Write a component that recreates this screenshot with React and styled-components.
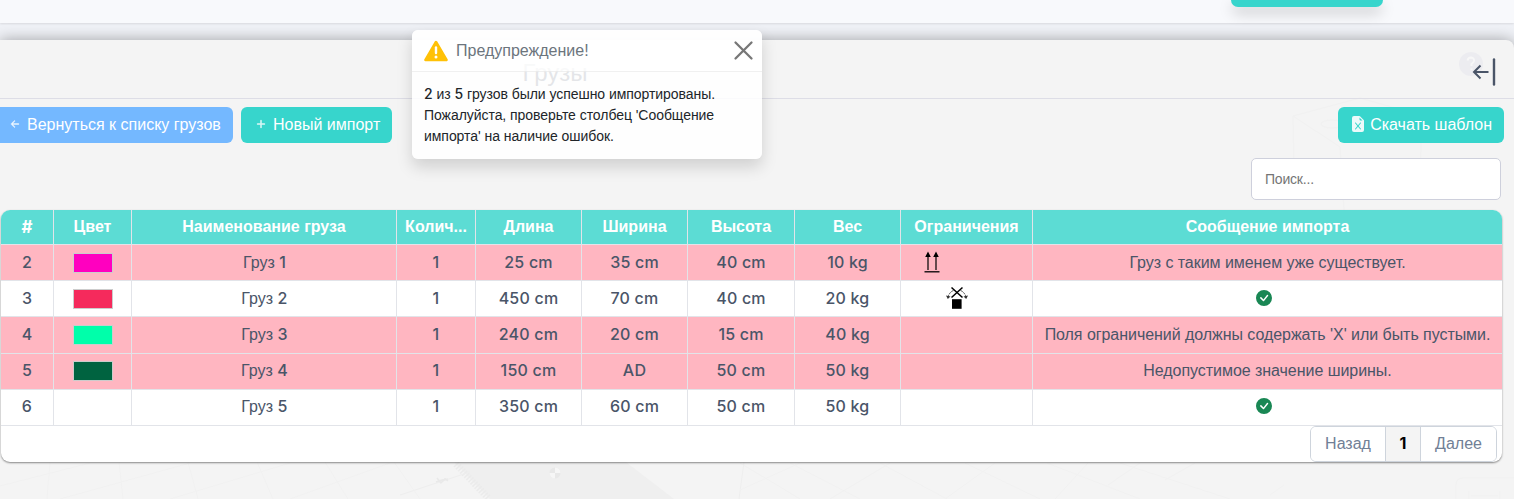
import React from "react";
import styled, { createGlobalStyle } from "styled-components";
import {
  BsArrowLeftShort,
  BsCheckCircleFill,
  BsFileEarmarkExcelFill,
  BsPlus,
} from "react-icons/bs";

const GlobalStyle = createGlobalStyle`
  * {
    box-sizing: border-box;
  }
  body {
    margin: 0;
    overflow: hidden;
    background-color: #f0f2f7;
    color: #4a5568;
    font-family: "Liberation Sans", Arial, sans-serif;
    font-size: 16px;
  }
`;

const Page = styled.div`
  height: 499px;
  display: flex;
  flex-direction: column;
  gap: 17px;
  overflow: hidden;
`;

const TopBar = styled.div`
  height: 23px;
  flex-shrink: 0;
  display: flex;
  justify-content: flex-end;
  padding-right: 131px;
  background-color: #f8f9fc;
  box-shadow: 0 1px 2px rgba(0, 0, 0, 0.1);
`;

const TopButton = styled.div`
  width: 152px;
  height: 7px;
  border-radius: 0 0 10px 10px;
  background-color: #37d5cc;
  box-shadow: 0 6px 14px rgba(0, 0, 0, 0.22);
`;

const Panel = styled.div`
  position: relative;
  flex: 1;
  border-top-right-radius: 8px;
  background-color: #f4f4f4;
  box-shadow: 0 0 15px rgba(0, 0, 0, 0.34);
`;

const Backdrop = styled.svg`
  position: absolute;
  top: 0;
  left: 0;
  width: 1514px;
  height: 459px;
  fill: none;
  stroke: #f1f1f1;
`;

const PanelHeader = styled.div`
  position: relative;
  height: 59px;
  display: flex;
  align-items: center;
  justify-content: center;
  padding: 8px 404px 0 0;
  border-bottom: 1px solid #dddde6;
`;

const Title = styled.h4`
  margin: 0;
  font-size: 24px;
  font-weight: 400;
`;

const CollapseIcon = styled.svg`
  position: absolute;
  top: 10px;
  right: 14px;
  width: 44px;
  height: 40px;
`;

const Toolbar = styled.div`
  position: relative;
  display: flex;
  gap: 8px;
  padding: 8px 10px 0 0;
`;

const Button = styled.button`
  height: 36px;
  display: flex;
  align-items: center;
  gap: 4px;
  padding: 0 12px;
  border: none;
  border-radius: 6px;
  background-color: ${({ $color }) => $color || "#37d5cc"};
  color: #fff;
  font-family: inherit;
  font-size: 16px;
  white-space: nowrap;
  svg {
    flex-shrink: 0;
    margin-bottom: 2px;
    stroke: ${({ $thick }) => ($thick ? "#fff" : "none")};
    stroke-width: 0.4px;
    opacity: 0.9;
  }
`;

const BackButton = styled(Button)`
  width: 233px;
  padding-left: 7px;
  border-radius: 0 6px 6px 0;
`;

const DownloadButton = styled(Button)`
  margin-left: auto;
`;

const SearchRow = styled.div`
  position: relative;
  display: flex;
  justify-content: flex-end;
  padding: 15px 13px 10px 0;
`;

const SearchInput = styled.input`
  width: 250px;
  height: 42px;
  padding: 0 13px;
  border: 1px solid #ced0dc;
  border-radius: 5px;
  background-color: #fff;
  font-family: inherit;
  font-size: 14px;
  letter-spacing: -0.2px;
  &::placeholder {
    color: #757575;
  }
`;

const Table = styled.div`
  position: relative;
  width: 1501px;
  margin-left: 1px;
  border-radius: 9px;
  background-color: #fff;
  box-shadow: 0 1px 2px rgba(0, 0, 0, 0.45);
  overflow: hidden;
`;

const Row = styled.div`
  display: grid;
  grid-template-columns: 53px 78px 265px 79px 106px 106px 107px 106px 132px 1fr;
  height: ${({ $height }) => $height || 36}px;
  border-bottom: 1px solid #e2e4e9;
  background-color: ${({ $failed }) => ($failed ? "#ffb6c1" : "#fff")};
`;

const HeadRow = styled(Row)`
  background-color: #5cdcd4;
  color: #fff;
  font-weight: 700;
`;

const Cell = styled.div`
  display: flex;
  align-items: center;
  justify-content: center;
  padding-bottom: ${({ $lift }) => $lift || 0}px;
  border-right: 1px solid #e2e4e9;
  white-space: pre;
  overflow: hidden;
  &:last-child {
    border-right: none;
  }
`;

const NameCell = styled(Cell)`
  padding-left: 1px;
`;

const IconCell = styled(Cell)`
  justify-content: flex-start;
  padding-left: ${({ $indent }) => $indent}px;
  padding-bottom: 1px;
`;

const MessageCell = styled(Cell)`
  letter-spacing: -0.05px;
  svg {
    margin: 0 8px 2px 0;
  }
`;

const Num = styled.span`
  margin-bottom: 2px;
  font-family: Inter, sans-serif;
  font-weight: ${({ $bold }) => ($bold ? 700 : 500)};
  letter-spacing: ${({ $spacing }) => $spacing ?? 0.2}px;
`;

const Hash = styled.span`
  font-family: Inter, sans-serif;
  font-size: 17px;
  font-weight: 700;
`;

const Swatch = styled.div`
  width: 40px;
  height: 20px;
  border: 1px solid #ccc;
  background-color: ${({ $color }) => $color};
`;

const Footer = styled.div`
  display: flex;
  justify-content: flex-end;
  height: 36px;
  padding-right: 5px;
`;

const Pagination = styled.div`
  display: grid;
  grid-template-columns: 74px 35px 1fr;
  width: 187px;
  border: 1px solid #ced4dc;
  border-radius: 6px;
  overflow: hidden;
`;

const PageItem = styled.div`
  display: flex;
  align-items: center;
  justify-content: center;
  color: ${({ $active }) => ($active ? "#000" : "#718096")};
  background-color: ${({ $active }) => ($active ? "#f4f4f4" : "#fff")};
  & + & {
    border-left: 1px solid #ced4dc;
  }
`;

const ToastBox = styled.div`
  position: absolute;
  top: 30px;
  left: 412px;
  width: 350px;
  height: 129px;
  border-radius: 6px;
  background-color: rgba(255, 255, 255, 0.85);
  box-shadow: 0 8px 16px rgba(0, 0, 0, 0.15);
  overflow: hidden;
`;

const ToastHeader = styled.div`
  height: 42px;
  display: flex;
  align-items: center;
  gap: 8px;
  padding: 0 8px 0 12px;
  background-color: rgba(255, 255, 255, 0.75);
  border-bottom: 1px solid rgba(0, 0, 0, 0.06);
  color: #6c757d;
`;

const CloseIcon = styled.svg`
  width: 21px;
  height: 21px;
  margin-left: auto;
`;

const ToastBody = styled.div`
  padding: 11px 12px;
  color: #212529;
  font-size: 14px;
  line-height: 21px;
  letter-spacing: -0.05px;
  white-space: pre-line;
`;

const headings = [
  "#",
  "Цвет",
  "Наименование груза",
  "Колич...",
  "Длина",
  "Ширина",
  "Высота",
  "Вес",
  "Ограничения",
  "Сообщение импорта",
];

const cargoes = [
  {
    id: 2,
    color: "#ff00bf",
    no: 1,
    sizes: ["25 cm", "35 cm", "40 cm", "10 kg"],
    limit: "up",
    error: "Груз с таким именем уже существует.",
  },
  {
    id: 3,
    color: "#f52a5c",
    no: 2,
    sizes: ["450 cm", "70 cm", "40 cm", "20 kg"],
    limit: "tilt",
  },
  {
    id: 4,
    color: "#00ffaa",
    no: 3,
    sizes: ["240 cm", "20 cm", "15 cm", "40 kg"],
    error: "Поля ограничений должны содержать 'X' или быть пустыми.",
    height: 37,
    lift: 1,
  },
  {
    id: 5,
    color: "#006340",
    no: 4,
    sizes: ["150 cm", "AD", "50 cm", "50 kg"],
    error: "Недопустимое значение ширины.",
    lift: 2,
  },
  { id: 6, no: 5, sizes: ["350 cm", "60 cm", "50 cm", "50 kg"], lift: 2 },
];

const WarningIcon = () => (
  <svg width="24" height="22" viewBox="0 0 24 22">
    <path
      d="M12 2L22.5 20H1.5Z"
      fill="#ffc107"
      stroke="#ffc107"
      strokeWidth="2.6"
      strokeLinejoin="round"
    />
    <path d="M12 7.5V13" stroke="#fff" strokeWidth="2.4" strokeLinecap="round" />
    <circle cx="12" cy="17" r="1.5" fill="#fff" />
  </svg>
);

const ThisSideUp = () => (
  <svg width="16" height="22" viewBox="0 0 16 22">
    <path d="M4 19V4M12 19V4" stroke="#000" strokeWidth="1.2" />
    <path d="M4 0.5L6.8 6H1.2ZM12 0.5L14.8 6H9.2Z" />
    <path d="M0.5 20.8H15.5" stroke="#000" strokeWidth="1.3" />
  </svg>
);

const NoTilt = () => (
  <svg width="24" height="24" viewBox="0 0 24 24">
    <rect x="7" y="13.2" width="9.6" height="9.6" />
    <path d="M6.5 1.5L17.5 11.5M17.5 1.5L6.5 11.5" stroke="#000" strokeWidth="1.5" />
    <path
      d="M8.5 4.5Q4.5 6 3 11M15.5 4.5Q19.5 6 21 11"
      stroke="#444"
      strokeDasharray="2.5 1"
      fill="none"
    />
    <path d="M1 9.5L2.8 13L5.5 10.5ZM23 9.5L21.2 13L18.5 10.5Z" fill="#333" />
  </svg>
);

// faint drawing of a container and its floor grid
const Scene = () => (
  <Backdrop viewBox="0 40 1514 459">
    <path d="M454 462L490 499H674L626 462Z" fill="#efefef" stroke="none" />
    <path d="M456 464L489 499" stroke="#ebebeb" strokeWidth="7" strokeDasharray="1.5 1.5" />
    <path d="M400 495L470 472M744 462L739 499" stroke="#eee" />
    <path d="M437 478l4 5 4-4 3 2M436 482l6-2 6-1" stroke="#e9e9e9" strokeWidth="1.5" />
    <circle cx="555" cy="473" r="5.5" fill="#e8e8e8" stroke="none" />
    <path
      d="M555 473V467.5A5.5 5.5 0 0 1 560.5 473ZM555 473V478.5A5.5 5.5 0 0 1 549.5 473Z"
      fill="#f6f6f6"
      stroke="none"
    />
    <path d="M0 486L90 463M60 499L190 463M170 499L290 463M290 499L390 463M50 462L47 499M119 462L123 499M188 462L198 499M257 462L273 499M325 462L348 499M394 462L420 499" />
    <path d="M740 463L800 499M790 463L860 499M740 490L800 463M830 499L890 463M880 463L947 499M945 499L995 463M965 463L1040 499M1055 499L1088 463M1047 463L1140 499M1120 463L1230 499M1108 485L1140 463M1165 480L1195 463M1270 495L1284 485" />
    <path d="M1520 478H1463Q1456 478 1456 485V499M1469 491V499M1500 491V499M1471 496H1498" />
    <path d="M1293 116L1340 147L1344 210M1293 116L1294 170M1293 116L1360 98L1420 115M1421 143L1420 200" />
    <ellipse cx="1332" cy="124" rx="11" ry="4" />
  </Backdrop>
);

const Toast = () => (
  <ToastBox>
    <ToastHeader>
      <WarningIcon />
      <span>Предупреждение!</span>
      <CloseIcon viewBox="0 0 21 21">
        <path
          d="M2.5 2.5L18.5 18.5M18.5 2.5L2.5 18.5"
          stroke="#777"
          strokeWidth="2.3"
          strokeLinecap="round"
        />
      </CloseIcon>
    </ToastHeader>
    <ToastBody>
      <Num $spacing={0}>2</Num> из <Num $spacing={0}>5</Num>
      {" грузов были успешно импортированы.\nПожалуйста, проверьте столбец 'Сообщение\nимпорта' на наличие ошибок."}
    </ToastBody>
  </ToastBox>
);

const CargoRow = ({ cargo }) => (
  <Row $failed={!!cargo.error} $height={cargo.height}>
    <Cell $lift={cargo.lift}>
      <Num>{cargo.id}</Num>
    </Cell>
    <Cell $lift={cargo.lift ? 1 : 0}>
      {cargo.color && <Swatch $color={cargo.color} />}
    </Cell>
    <NameCell $lift={cargo.lift}>
      {"Груз "}
      <Num>{cargo.no}</Num>
    </NameCell>
    <Cell $lift={cargo.lift}>
      <Num>1</Num>
    </Cell>
    {cargo.sizes.map((size, i) => (
      <Cell key={i} $lift={cargo.lift}>
        <Num>{size}</Num>
      </Cell>
    ))}
    <IconCell $indent={cargo.limit === "tilt" ? 44 : 23}>
      {cargo.limit === "up" && <ThisSideUp />}
      {cargo.limit === "tilt" && <NoTilt />}
    </IconCell>
    <MessageCell $lift={cargo.lift}>
      {cargo.error || <BsCheckCircleFill size={16} color="#198754" />}
    </MessageCell>
  </Row>
);

const App = () => {
  return (
    <Page>
      <GlobalStyle />
      <TopBar>
        <TopButton />
      </TopBar>
      <Panel>
        <Scene />
        <PanelHeader>
          <Title>Грузы</Title>
          <CollapseIcon viewBox="0 0 44 40" fill="none" stroke="#4a5568">
            <circle cx="15" cy="14" r="12" fill="#ececf0" stroke="none" />
            <path
              d="M11.5 10.5Q12 7.5 15 7.5Q18.5 8 18 11Q17.5 12.5 15.5 14V16M15.5 18.5V20"
              stroke="#f7f7f7"
              strokeWidth="2"
            />
            <path d="M32.5 22H18M24.5 15.5L18 22L24.5 28.5" strokeWidth="2" />
            <path d="M38 9.5V34.5" strokeWidth="2.4" strokeLinecap="round" />
          </CollapseIcon>
        </PanelHeader>
        <Toolbar>
          <BackButton $color="#74b8ff" $thick>
            <BsArrowLeftShort size={16} />
            Вернуться к списку грузов
          </BackButton>
          <Button $thick>
            <BsPlus size={16} />
            Новый импорт
          </Button>
          <DownloadButton>
            <BsFileEarmarkExcelFill size={16} />
            Скачать шаблон
          </DownloadButton>
        </Toolbar>
        <SearchRow>
          <SearchInput placeholder="Поиск..." />
        </SearchRow>
        <Table>
          <HeadRow $height={35}>
            {headings.map((text) => (
              <Cell key={text}>{text === "#" ? <Hash>#</Hash> : text}</Cell>
            ))}
          </HeadRow>
          {cargoes.map((cargo) => (
            <CargoRow key={cargo.id} cargo={cargo} />
          ))}
          <Footer>
            <Pagination>
              <PageItem>Назад</PageItem>
              <PageItem $active>
                <Num $bold>1</Num>
              </PageItem>
              <PageItem>Далее</PageItem>
            </Pagination>
          </Footer>
        </Table>
      </Panel>
      <Toast />
    </Page>
  );
};

export default App;
